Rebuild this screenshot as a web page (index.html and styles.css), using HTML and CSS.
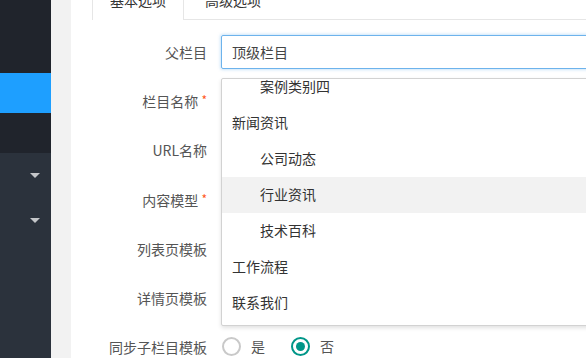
FILE: index.html
```html
<!DOCTYPE html>
<html lang="zh-CN">
<head>
<meta charset="utf-8">
<title>栏目编辑</title>
<link rel="stylesheet" href="styles.css">
</head>
<body>
<div class="layout">
  <aside class="side">
    <div class="side-child">
      <div class="child-item"></div>
      <div class="child-item"></div>
      <div class="child-item is-active"></div>
      <div class="child-item"></div>
    </div>
    <div class="nav-item"><span class="caret"></span></div>
    <div class="nav-item"><span class="caret"></span></div>
    <div class="nav-item"></div>
  </aside>
  <main class="body">
    <section class="card">
      <ul class="tab-title">
        <li class="tab is-this">基本选项</li>
        <li class="tab">高级选项</li>
      </ul>
      <form class="form">
        <div class="form-item">
          <label class="form-label">父栏目</label>
          <div class="form-block">
            <div class="select-input">顶级栏目</div>
            <div class="select-dl">
              <div class="select-scroll">
                <div class="opt opt-child">案例类别四</div>
                <div class="opt">新闻资讯</div>
                <div class="opt opt-child">公司动态</div>
                <div class="opt opt-child is-hover">行业资讯</div>
                <div class="opt opt-child">技术百科</div>
                <div class="opt">工作流程</div>
                <div class="opt">联系我们</div>
              </div>
            </div>
          </div>
        </div>
        <div class="form-item">
          <label class="form-label">栏目名称 <span class="req">*</span></label>
          <div class="form-block"></div>
        </div>
        <div class="form-item">
          <label class="form-label">URL名称</label>
          <div class="form-block"></div>
        </div>
        <div class="form-item">
          <label class="form-label">内容模型 <span class="req">*</span></label>
          <div class="form-block"></div>
        </div>
        <div class="form-item">
          <label class="form-label">列表页模板</label>
          <div class="form-block"></div>
        </div>
        <div class="form-item">
          <label class="form-label">详情页模板</label>
          <div class="form-block"></div>
        </div>
        <div class="form-item">
          <label class="form-label">同步子栏目模板</label>
          <div class="form-block radios">
            <span class="radio"><i class="radio-icon"></i>是</span>
            <span class="radio is-checked"><i class="radio-icon"></i>否</span>
          </div>
        </div>
      </form>
    </section>
  </main>
</div>
</body>
</html>
```

FILE: styles.css
```css
* { box-sizing: border-box; }
html, body {
  margin: 0;
  padding: 0;
  width: 586px;
  height: 358px;
  overflow: hidden;
  font-family: "Noto Sans CJK SC", "Noto Sans", sans-serif;
  font-size: 14px;
  color: #333;
}
.layout {
  display: flex;
  height: 358px;
}
.side {
  width: 51px;
  flex: none;
  background: #2b323c;
  overflow: hidden;
}
.side-child {
  background: #20242c;
  margin-top: -7px;
}
.child-item { height: 40px; }
.child-item.is-active { background: #1e9fff; }
.nav-item {
  height: 45px;
  display: flex;
  align-items: center;
  justify-content: flex-end;
  padding-right: 11px;
}
.caret {
  width: 0;
  height: 0;
  border-left: 5.5px solid transparent;
  border-right: 5.5px solid transparent;
  border-top: 5px solid #c4c6c9;
}
.body {
  flex: 1;
  background: #f2f2f2;
  padding-left: 20px;
  overflow: hidden;
}
.card {
  background: #fff;
  width: 560px;
  height: 400px;
  padding-left: 21px;
  margin-top: -21px;
}
.tab-title {
  list-style: none;
  margin: 0;
  padding: 0;
  display: flex;
  height: 41px;
  border-bottom: 1px solid #e6e6e6;
}
.tab {
  height: 41px;
  line-height: 40px;
  padding: 0 17px;
  border: 1px solid transparent;
  border-bottom: none;
  color: #333;
  margin-left: 3px;
}
.tab.is-this {
  border-color: #e6e6e6;
  background: #fff;
  height: 41px;
  margin-bottom: -1px;
  margin-left: 0;
}
.form {
  padding-top: 15px;
}
.form-item {
  display: flex;
  align-items: center;
  height: 34px;
  margin-bottom: 15.2px;
}
.form-label {
  width: 129px;
  flex: none;
  text-align: right;
  padding-right: 14px;
  color: #555;
  white-space: nowrap;
}
.req {
  color: #ff5722;
  font-size: 12px;
  position: relative;
  top: -2px;
}
.form-block {
  position: relative;
  flex: 1;
  height: 34px;
}
.select-input {
  width: 420px;
  height: 34px;
  line-height: 32px;
  padding-left: 10px;
  border: 1px solid #6db3ec;
  border-radius: 2px;
  box-shadow: 0 0 3px 1px rgba(109, 179, 236, 0.35);
  color: #444;
}
.select-dl {
  position: absolute;
  left: 0;
  top: 43px;
  width: 420px;
  height: 248px;
  padding: 5px 0;
  border: 1px solid #d2d2d2;
  border-radius: 2px;
  background: #fff;
  box-shadow: 0 2px 4px rgba(0, 0, 0, 0.12);
  overflow: hidden;
  z-index: 10;
}
.select-scroll {
  margin-top: -15px;
}
.opt {
  height: 36px;
  line-height: 34px;
  padding-left: 10px;
  color: #333;
  white-space: nowrap;
}
.opt-child { padding-left: 38px; }
.opt.is-hover { background: #f2f2f2; }
.radios {
  display: flex;
  align-items: center;
  margin-top: -2px;
}
.radio {
  display: inline-flex;
  align-items: center;
  margin-right: 25px;
  color: #555;
  margin-left: 1px;
}
.radio-icon {
  width: 19px;
  height: 19px;
  border-radius: 50%;
  border: 2px solid #c9c9c9;
  margin-right: 10px;
  display: inline-flex;
  align-items: center;
  justify-content: center;
}
.radio.is-checked .radio-icon {
  border-color: #009688;
}
.radio.is-checked .radio-icon::after {
  content: "";
  width: 9px;
  height: 9px;
  border-radius: 50%;
  background: #009688;
}
```
